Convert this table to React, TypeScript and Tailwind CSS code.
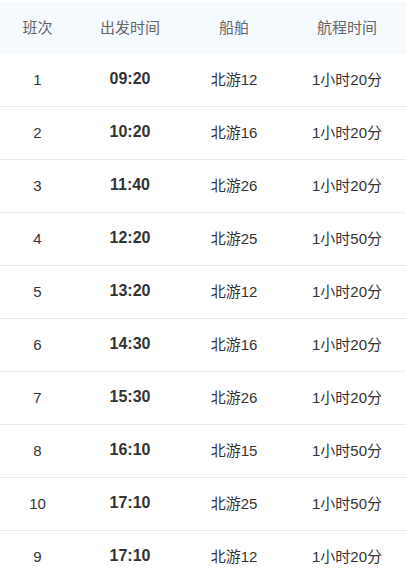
import React from 'react';

const rows = [
  ['1', '09:20', '北游12', '1小时20分'],
  ['2', '10:20', '北游16', '1小时20分'],
  ['3', '11:40', '北游26', '1小时20分'],
  ['4', '12:20', '北游25', '1小时50分'],
  ['5', '13:20', '北游12', '1小时20分'],
  ['6', '14:30', '北游16', '1小时20分'],
  ['7', '15:30', '北游26', '1小时20分'],
  ['8', '16:10', '北游15', '1小时50分'],
  ['10', '17:10', '北游25', '1小时50分'],
  ['9', '17:10', '北游12', '1小时20分'],
];

export default function App() {
  return (
    <div
      className="w-[406px] bg-white pt-[2px] text-[15px] text-[#333]"
      style={{ fontFamily: '"Liberation Sans", "Noto Sans CJK SC", sans-serif' }}
    >
      {/* Header */}
      <div className="grid h-[52px] grid-cols-[75px_110px_98px_1fr] items-center bg-[#f5faff] text-center text-[#666]">
        <div>班次</div>
        <div>出发时间</div>
        <div>船舶</div>
        <div className="pl-[5px]">航程时间</div>
      </div>

      {/* Rows */}
      {rows.map((r, i) => (
        <div
          key={i}
          className="grid h-[53px] grid-cols-[75px_110px_98px_1fr] items-center border-b border-[#ebebeb] text-center"
        >
          <div>{r[0]}</div>
          <div className="-mt-[2px] text-[16px] font-bold">{r[1]}</div>
          <div>{r[2]}</div>
          <div className="pl-[5px]">{r[3]}</div>
        </div>
      ))}
    </div>
  );
}
